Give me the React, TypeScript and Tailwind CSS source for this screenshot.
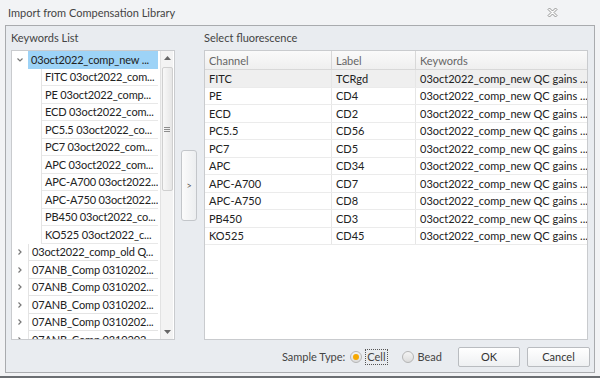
import React from 'react';

const children = [
    'FITC 03oct2022_com...',
    'PE 03oct2022_comp...',
    'ECD 03oct2022_com...',
    'PC5.5 03oct2022_co...',
    'PC7 03oct2022_com...',
    'APC 03oct2022_com...',
    'APC-A700 03oct2022...',
    'APC-A750 03oct2022...',
    'PB450 03oct2022_co...',
    'KO525 03oct2022_c...',
];

const roots = [
    '03oct2022_comp_old Q...',
    '07ANB_Comp 0310202...',
    '07ANB_Comp 0310202...',
    '07ANB_Comp 0310202...',
    '07ANB_Comp 0310202...',
    '07ANB_Comp 0310202...',
];

const rows = [
    { ch: 'FITC', label: 'TCRgd' },
    { ch: 'PE', label: 'CD4' },
    { ch: 'ECD', label: 'CD2' },
    { ch: 'PC5.5', label: 'CD56' },
    { ch: 'PC7', label: 'CD5' },
    { ch: 'APC', label: 'CD34' },
    { ch: 'APC-A700', label: 'CD7' },
    { ch: 'APC-A750', label: 'CD8' },
    { ch: 'PB450', label: 'CD3' },
    { ch: 'KO525', label: 'CD45' },
];

const Chevron = ({ down }: { down?: boolean }) => (
    <svg width="8" height="8" viewBox="0 0 8 8" className="text-[#777]">
        {down ? (
            <path d="M1.5 2.5 L4 5 L6.5 2.5" fill="none" stroke="currentColor" strokeWidth="1.2" />
        ) : (
            <path d="M2.5 1.5 L5 4 L2.5 6.5" fill="none" stroke="currentColor" strokeWidth="1.2" />
        )}
    </svg>
);

const Radio = ({ checked }: { checked?: boolean }) => (
    <span className="w-[12px] h-[12px] rounded-full border border-[#b5b5b5] bg-gradient-to-b from-[#f4f4f4] to-[#dcdcdc] flex items-center justify-center">
        {checked && <span className="w-[6px] h-[6px] rounded-full bg-[#f6a800]" />}
    </span>
);

export default function App() {
    return (
        <div className="w-[600px] h-[378px] bg-[#f2f3f5] flex flex-col text-[#333] font-['Lato',sans-serif] overflow-hidden whitespace-nowrap">
            {/* Title bar */}
            <div className="h-[25px] flex items-center justify-between pl-[8px] pr-[42px] shrink-0">
                <span className="text-[11px] text-[#444] leading-none">Import from Compensation Library</span>
                <svg width="11" height="11" viewBox="0 0 11 11">
                    <path
                        d="M1 2.5 L2.5 1 L5.5 4 L8.5 1 L10 2.5 L7 5.5 L10 8.5 L8.5 10 L5.5 7 L2.5 10 L1 8.5 L4 5.5 Z"
                        fill="#fafafa"
                        stroke="#8a8a8a"
                        strokeWidth="0.9"
                        strokeLinejoin="round"
                    />
                </svg>
            </div>

            {/* Frame */}
            <div className="mx-[5px] h-[348px] border border-[#a9abae] bg-[#e9ecf0] flex flex-col shrink-0">
                <div className="flex pl-[5px]">
                    {/* Keywords list */}
                    <div className="w-[164px] flex flex-col">
                        <div className="h-[24px] flex items-center text-[11px] text-[#444]">Keywords List</div>
                        <div className="h-[290px] border border-[#c9cbce] bg-white flex text-[11px] leading-none tracking-[-0.15px]">
                            <div className="w-[146px] overflow-hidden flex flex-col">
                                <div className="h-[17.5px] flex shrink-0">
                                    <div className="w-[16px] shrink-0 flex items-center justify-center">
                                        <Chevron down />
                                    </div>
                                    <div className="flex-1 overflow-hidden bg-[#9dd3f7] flex items-center pl-[3px] text-[#222]">
                                        03oct2022_comp_new ...
                                    </div>
                                </div>
                                {children.map((c) => (
                                    <div key={c} className="h-[17.5px] flex shrink-0">
                                        <div className="w-[30px] shrink-0 border-r border-[#e4e4e4]" />
                                        <div className="flex-1 overflow-hidden border-b border-[#e8e8e8] flex items-center pl-[3px] text-[#222]">
                                            {c}
                                        </div>
                                    </div>
                                ))}
                                {roots.map((r, i) => (
                                    <div key={i} className="h-[17.5px] flex shrink-0">
                                        <div className="w-[16px] shrink-0 flex items-center justify-center">
                                            <Chevron />
                                        </div>
                                        <div className="flex-1 overflow-hidden border-l border-b border-[#e4e4e4] flex items-center pl-[3px] text-[#222]">
                                            {r}
                                        </div>
                                    </div>
                                ))}
                            </div>
                            {/* Scrollbar */}
                            <div className="ml-[2px] w-[13px] bg-[#f3f3f3] border-l border-[#e2e2e2] flex flex-col items-center">
                                <div className="h-[14px] flex items-center justify-center">
                                    <svg width="7" height="4" viewBox="0 0 7 4">
                                        <path d="M0 4 L3.5 0 L7 4 Z" fill="#666" />
                                    </svg>
                                </div>
                                <div className="mt-[2px] w-[11px] h-[124px] rounded-[2px] border border-[#cfcfcf] bg-gradient-to-r from-[#f8f8f8] to-[#e6e6e6] flex items-center justify-center">
                                    <div className="flex flex-col gap-[1px]">
                                        <span className="w-[6px] h-px bg-[#8d8d8d]" />
                                        <span className="w-[6px] h-px bg-[#8d8d8d]" />
                                        <span className="w-[6px] h-px bg-[#8d8d8d]" />
                                    </div>
                                </div>
                                <div className="flex-1" />
                                <div className="h-[14px] flex items-center justify-center">
                                    <svg width="7" height="4" viewBox="0 0 7 4">
                                        <path d="M0 0 L3.5 4 L7 0 Z" fill="#666" />
                                    </svg>
                                </div>
                            </div>
                        </div>
                    </div>

                    {/* Move button */}
                    <div className="w-[29px] flex flex-col">
                        <div className="h-[124px]" />
                        <div className="ml-[6px] w-[16px] h-[71px] rounded-[3px] border border-[#c3c6ca] bg-gradient-to-r from-[#fbfbfb] to-[#eceef0] flex items-center justify-center text-[9px] text-[#555]">
                            &gt;
                        </div>
                    </div>

                    {/* Fluorescence table */}
                    <div className="w-[384px] flex flex-col">
                        <div className="h-[24px] flex items-center text-[11px] text-[#444]">Select fluorescence</div>
                        <div className="h-[290px] border border-[#c9cbce] bg-white flex flex-col text-[11px] leading-none">
                            <div className="h-[19px] flex bg-gradient-to-b from-[#fafafa] to-[#efefef] border-b border-[#d8d8d8] text-[#666] shrink-0">
                                <div className="w-[127px] border-r border-[#d8d8d8] flex items-center pl-[4px]">Channel</div>
                                <div className="w-[84px] border-r border-[#d8d8d8] flex items-center pl-[4px]">Label</div>
                                <div className="flex-1 flex items-center pl-[4px]">Keywords</div>
                            </div>
                            {rows.map((r, i) => (
                                <div
                                    key={r.ch}
                                    className={`h-[17.5px] flex border-b border-[#ebebeb] text-[#222] shrink-0 ${i === 0 ? 'bg-[#efefef]' : ''}`}
                                >
                                    <div className="w-[127px] border-r border-[#e6e6e6] flex items-center pl-[4px]">{r.ch}</div>
                                    <div className="w-[84px] border-r border-[#e6e6e6] flex items-center pl-[4px]">{r.label}</div>
                                    <div className="flex-1 overflow-hidden flex items-center pl-[4px]">03oct2022_comp_new QC gains ...</div>
                                </div>
                            ))}
                        </div>
                    </div>
                </div>

                {/* Footer */}
                <div className="flex items-center justify-end pr-[4px] mt-[7px] text-[11px] text-[#444]">
                    <span className="mr-[5px]">Sample Type:</span>
                    <Radio checked />
                    <span className="ml-[3px] px-[1px] border border-dotted border-[#555] leading-[14px]">Cell</span>
                    <span className="ml-[14px]">
                        <Radio />
                    </span>
                    <span className="ml-[4px]">Bead</span>
                    <button className="ml-[16px] w-[62px] h-[20px] rounded-[2px] border border-[#b9bcc0] bg-gradient-to-b from-[#ffffff] to-[#eef0f2] text-[11px] text-[#333]">
                        OK
                    </button>
                    <button className="ml-[7px] w-[63px] h-[20px] rounded-[2px] border border-[#b9bcc0] bg-gradient-to-b from-[#ffffff] to-[#eef0f2] text-[11px] text-[#333]">
                        Cancel
                    </button>
                </div>
            </div>
            <div className="flex-1" />
            <div className="h-[2px] bg-[#6b6e72] shrink-0" />
        </div>
    );
}
